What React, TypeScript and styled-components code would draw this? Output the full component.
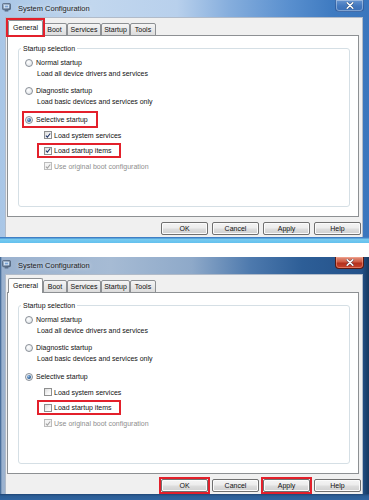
import React from "react";
import styled, { createGlobalStyle } from "styled-components";

const Global = createGlobalStyle`
  html, body { margin: 0; padding: 0; background: #ffffff; }
  body {
    width: 369px; height: 500px; overflow: hidden;
    font-family: "Liberation Sans", Arial, sans-serif;
    font-size: 7px; color: #111;
  }
  * { box-sizing: border-box; }
`;

const Page = styled.div`
  display: flex;
  flex-direction: column;
  gap: 14px;
  width: 369px;
`;

type Variant = "light" | "dark";

const Window = styled.div<{ $variant: Variant }>`
  height: 243px;
  display: flex;
  flex-direction: column;
  background: ${(p) =>
    p.$variant === "light"
      ? "linear-gradient(90deg, #a9c6e6 0%, #c2d7ee 25%, #b8d0ec 48%, #86aedd 62%, #5a90cf 78%, #3f7bc1 90%, #3a76bd 100%)"
      : "linear-gradient(90deg, #2f5a8c 0, #9bb2cf 2px, #a6bbd4 30%, #8ea9c9 52%, #4d79ad 68%, #2d5e97 82%, #24528a 98%, #16385f 100%)"};
`;

const TitleBar = styled.div`
  height: 17px;
  display: flex;
  align-items: flex-start;
  padding-left: 2px;
`;

const AppIcon = styled.svg`
  width: 9px;
  height: 9px;
  margin-top: 3px;
  flex: none;
`;

const Title = styled.span`
  margin-left: 7px;
  margin-top: 4px;
  font-size: 7.5px;
  line-height: 9px;
  color: #1b1b1b;
  text-shadow: 0 0 4px rgba(255, 255, 255, 0.9);
`;

const CloseButton = styled.div<{ $variant: Variant }>`
  margin-left: auto;
  margin-right: 5px;
  width: 29px;
  height: 12px;
  border-radius: 0 0 4px 4px;
  display: flex;
  align-items: center;
  justify-content: center;
  border: 1px solid ${(p) => (p.$variant === "light" ? "rgba(40,80,140,0.55)" : "#5a1a12")};
  border-top: none;
  box-shadow: inset 0 0 0 1px ${(p) => (p.$variant === "light" ? "rgba(255,255,255,0.35)" : "rgba(255,180,160,0.45)")};
  background: ${(p) =>
    p.$variant === "light"
      ? "linear-gradient(180deg, rgba(120,160,215,0.7) 0%, rgba(70,120,190,0.7) 55%, rgba(60,110,180,0.8) 100%)"
      : "linear-gradient(180deg, #e3937f 0%, #cf5a42 45%, #b3301d 55%, #c8442c 100%)"};
`;

const Body = styled.div`
  flex: 1;
  margin: 0 6px 0 5px;
  background: #f0f0f0;
  border: 1px solid rgba(60, 90, 130, 0.35);
  border-bottom: none;
  display: flex;
  flex-direction: column;
  padding: 3px 2px 2px 1px;
`;

const BottomFrame = styled.div<{ $variant: Variant }>`
  height: 6px;
  background: ${(p) =>
    p.$variant === "light"
      ? "linear-gradient(180deg, #3f80c6 0, #3f80c6 1px, #79cbef 2px, #63c0ee 100%)"
      : "linear-gradient(180deg, #1e4675 0, #2b5d95 2px, #2f64a0 100%)"};
`;

const TabStrip = styled.div`
  height: 15px;
  margin-bottom: -1px;
  margin-left: 1px;
  display: flex;
  align-items: flex-end;
  position: relative;
  z-index: 1;
`;

const Tab = styled.div<{ $selected?: boolean; $w: number }>`
  width: ${(p) => p.$w}px;
  height: ${(p) => (p.$selected ? 15 : 13)}px;
  border: 1px solid #8d9093;
  border-bottom: ${(p) => (p.$selected ? "none" : "1px solid #8d9093")};
  border-left-width: ${(p) => (p.$selected ? 1 : 0)}px;
  border-radius: 2px 2px 0 0;
  background: ${(p) => (p.$selected ? "#ffffff" : "linear-gradient(180deg, #f5f5f5 0%, #e9e9e9 50%, #dcdcdc 100%)")};
  display: flex;
  align-items: ${(p) => (p.$selected ? "flex-start" : "center")};
  padding-top: ${(p) => (p.$selected ? 2 : 0)}px;
  justify-content: center;
  font-size: 7px;
  line-height: 9px;
  white-space: nowrap;
  & + & { border-left-width: 1px; }
`;

const Highlight = styled.span<{ $t?: number; $r?: number; $b?: number; $l?: number }>`
  display: inline-flex;
  align-self: flex-start;
  border: 2px solid #e3202b;
  padding: ${(p) => `${p.$t ?? 0}px ${p.$r ?? 0}px ${p.$b ?? 0}px ${p.$l ?? 0}px`};
  margin: ${(p) => `${-((p.$t ?? 0) + 2)}px ${-((p.$r ?? 0) + 2)}px ${-((p.$b ?? 0) + 2)}px ${-((p.$l ?? 0) + 2)}px`};
  position: relative;
  z-index: 2;
`;

const TabHighlight = styled(Highlight)`
  align-self: flex-end;
  margin-bottom: -1px;
`;

const Panel = styled.div`
  height: 182px;
  margin-right: 1px;
  border: 1px solid #8d9093;
  background: #ffffff;
  padding: 8px 8px 9px 10px;
  display: flex;
  flex-direction: column;
`;

const GroupBox = styled.fieldset`
  flex: 1;
  margin: 0;
  min-width: 0;
  border: 1px solid #d5dfe5;
  border-radius: 3px;
  padding: 4px 6px 0 6px;
  display: flex;
  flex-direction: column;
`;

const Legend = styled.legend`
  padding: 0 2px;
  margin-left: -4px;
  font-size: 7px;
  line-height: 9px;
`;

const OptionRow = styled.div<{ $gap?: number }>`
  display: flex;
  align-items: center;
  height: 11px;
  margin-top: ${(p) => p.$gap ?? 0}px;
  white-space: nowrap;
`;

const Description = styled.div`
  height: 11px;
  line-height: 11px;
  padding-left: 12px;
  white-space: nowrap;
`;

const RadioCircle = styled.span<{ $checked?: boolean }>`
  width: 8px;
  height: 8px;
  flex: none;
  border-radius: 50%;
  border: 1px solid #8a9098;
  background: radial-gradient(circle at 40% 35%, #ffffff 0%, #e9ecef 60%, #d3d8de 100%);
  display: flex;
  align-items: center;
  justify-content: center;
  margin-right: 3px;
  &::after {
    content: "";
    display: ${(p) => (p.$checked ? "block" : "none")};
    width: 4px;
    height: 4px;
    border-radius: 50%;
    background: radial-gradient(circle at 35% 35%, #a8c8ea 0%, #3b6fa8 50%, #173f6e 100%);
  }
`;

const CheckList = styled.div`
  display: flex;
  flex-direction: column;
  padding-left: 19px;
`;

const CheckRow = styled.div<{ $disabled?: boolean }>`
  display: flex;
  align-items: center;
  height: 11px;
  margin-top: 4.5px;
  white-space: nowrap;
  color: ${(p) => (p.$disabled ? "#8e8e8e" : "#111")};
`;

const CheckBox = styled.span<{ $disabled?: boolean }>`
  width: 8px;
  height: 8px;
  flex: none;
  margin-right: 2px;
  border: 1px solid ${(p) => (p.$disabled ? "#bcbcbc" : "#8e8f8f")};
  background: ${(p) => (p.$disabled ? "#f4f4f4" : "linear-gradient(135deg, #dcdcdc 0%, #f6f6f6 60%, #ffffff 100%)")};
  display: flex;
  align-items: center;
  justify-content: center;
`;

const CheckMark = styled.svg`
  width: 7px;
  height: 7px;
`;

const ButtonRow = styled.div`
  display: flex;
  justify-content: flex-end;
  align-items: center;
  gap: 4px;
  margin-top: 5px;
  margin-right: -1px;
  height: 13px;
`;

const Button = styled.div`
  width: 47px;
  height: 13px;
  border: 1px solid #707070;
  border-radius: 2px;
  background: linear-gradient(180deg, #f4f4f4 0%, #ececec 48%, #dedede 52%, #d0d0d0 100%);
  box-shadow: inset 0 0 0 1px #fbfbfb;
  display: flex;
  align-items: center;
  justify-content: center;
  font-size: 7px;
  line-height: 9px;
`;

function Check({ checked, disabled }: { checked: boolean; disabled?: boolean }) {
  return (
    <CheckBox $disabled={disabled}>
      {checked && (
        <CheckMark viewBox="0 0 7 7">
          <path
            d="M1 3.6 L2.8 5.4 L6.1 1.2"
            fill="none"
            stroke={disabled ? "#a3a3a3" : "#23386a"}
            strokeWidth="1.3"
          />
        </CheckMark>
      )}
    </CheckBox>
  );
}

function Icon() {
  return (
    <AppIcon viewBox="0 0 9 9">
      <defs>
        <linearGradient id="ic" x1="0" y1="0" x2="1" y2="1">
          <stop offset="0" stopColor="#9db0c6" />
          <stop offset="1" stopColor="#4d6380" />
        </linearGradient>
      </defs>
      <rect x="0.5" y="0.5" width="8" height="6.2" rx="1" fill="url(#ic)" stroke="#3e4f66" strokeWidth="0.6" />
      <rect x="1.8" y="1.7" width="5.4" height="3.6" fill="#dbe8f6" />
      <rect x="2.8" y="2.6" width="3.4" height="1.8" fill="#7aa3d4" />
      <rect x="2.5" y="7" width="4" height="1.5" rx="0.4" fill="#5a6f8a" />
    </AppIcon>
  );
}

function CloseGlyph() {
  return (
    <svg width="8" height="7" viewBox="0 0 8 7">
      <path d="M1.2 0.8 L6.8 6.2 M6.8 0.8 L1.2 6.2" stroke="#2a3d58" strokeWidth="2.6" strokeLinecap="round" opacity="0.55" />
      <path d="M1.2 0.8 L6.8 6.2 M6.8 0.8 L1.2 6.2" stroke="#ffffff" strokeWidth="1.5" strokeLinecap="round" />
    </svg>
  );
}

type DialogProps = {
  variant: Variant;
  after: boolean;
};

const tabs = [
  { label: "General", w: 35 },
  { label: "Boot", w: 24 },
  { label: "Services", w: 34 },
  { label: "Startup", w: 29 },
  { label: "Tools", w: 26 },
];

function Dialog({ variant, after }: DialogProps) {
  const checked = !after;
  return (
    <Window $variant={variant}>
      <TitleBar>
        <Icon />
        <Title>System Configuration</Title>
        <CloseButton $variant={variant}>
          <CloseGlyph />
        </CloseButton>
      </TitleBar>
      <Body>
        <TabStrip>
          {tabs.map((t, i) =>
            i === 0 ? (
              after ? (
                <Tab key={t.label} $w={t.w} $selected>
                  {t.label}
                </Tab>
              ) : (
                <TabHighlight key={t.label}>
                  <Tab $w={t.w} $selected>
                    {t.label}
                  </Tab>
                </TabHighlight>
              )
            ) : (
              <Tab key={t.label} $w={t.w}>
                {t.label}
              </Tab>
            )
          )}
        </TabStrip>
        <Panel>
          <GroupBox>
            <Legend>Startup selection</Legend>
            <OptionRow>
              <RadioCircle />
              Normal startup
            </OptionRow>
            <Description>Load all device drivers and services</Description>
            <OptionRow $gap={6}>
              <RadioCircle />
              Diagnostic startup
            </OptionRow>
            <Description>Load basic devices and services only</Description>
            {after ? (
              <OptionRow $gap={7}>
                <RadioCircle $checked />
                Selective startup
              </OptionRow>
            ) : (
              <Highlight $t={1} $r={8} $b={1} $l={1} style={{ marginTop: 4 }}>
                <OptionRow>
                  <RadioCircle $checked />
                  Selective startup
                </OptionRow>
              </Highlight>
            )}
            <CheckList>
              <CheckRow>
                <Check checked={checked} />
                Load system services
              </CheckRow>
              <Highlight $t={0} $r={7} $b={0} $l={5} style={{ marginTop: 2.5 }}>
                <CheckRow style={{ marginTop: 0 }}>
                  <Check checked={checked} />
                  Load startup items
                </CheckRow>
              </Highlight>
              <CheckRow $disabled>
                <Check checked disabled />
                Use original boot configuration
              </CheckRow>
            </CheckList>
          </GroupBox>
        </Panel>
        <ButtonRow>
          {after ? (
            <Highlight>
              <Button>OK</Button>
            </Highlight>
          ) : (
            <Button>OK</Button>
          )}
          <Button>Cancel</Button>
          {after ? (
            <Highlight>
              <Button>Apply</Button>
            </Highlight>
          ) : (
            <Button>Apply</Button>
          )}
          <Button>Help</Button>
        </ButtonRow>
      </Body>
      <BottomFrame $variant={variant} />
    </Window>
  );
}

export default function App() {
  return (
    <>
      <Global />
      <Page>
        <Dialog variant="light" after={false} />
        <Dialog variant="dark" after />
      </Page>
    </>
  );
}
